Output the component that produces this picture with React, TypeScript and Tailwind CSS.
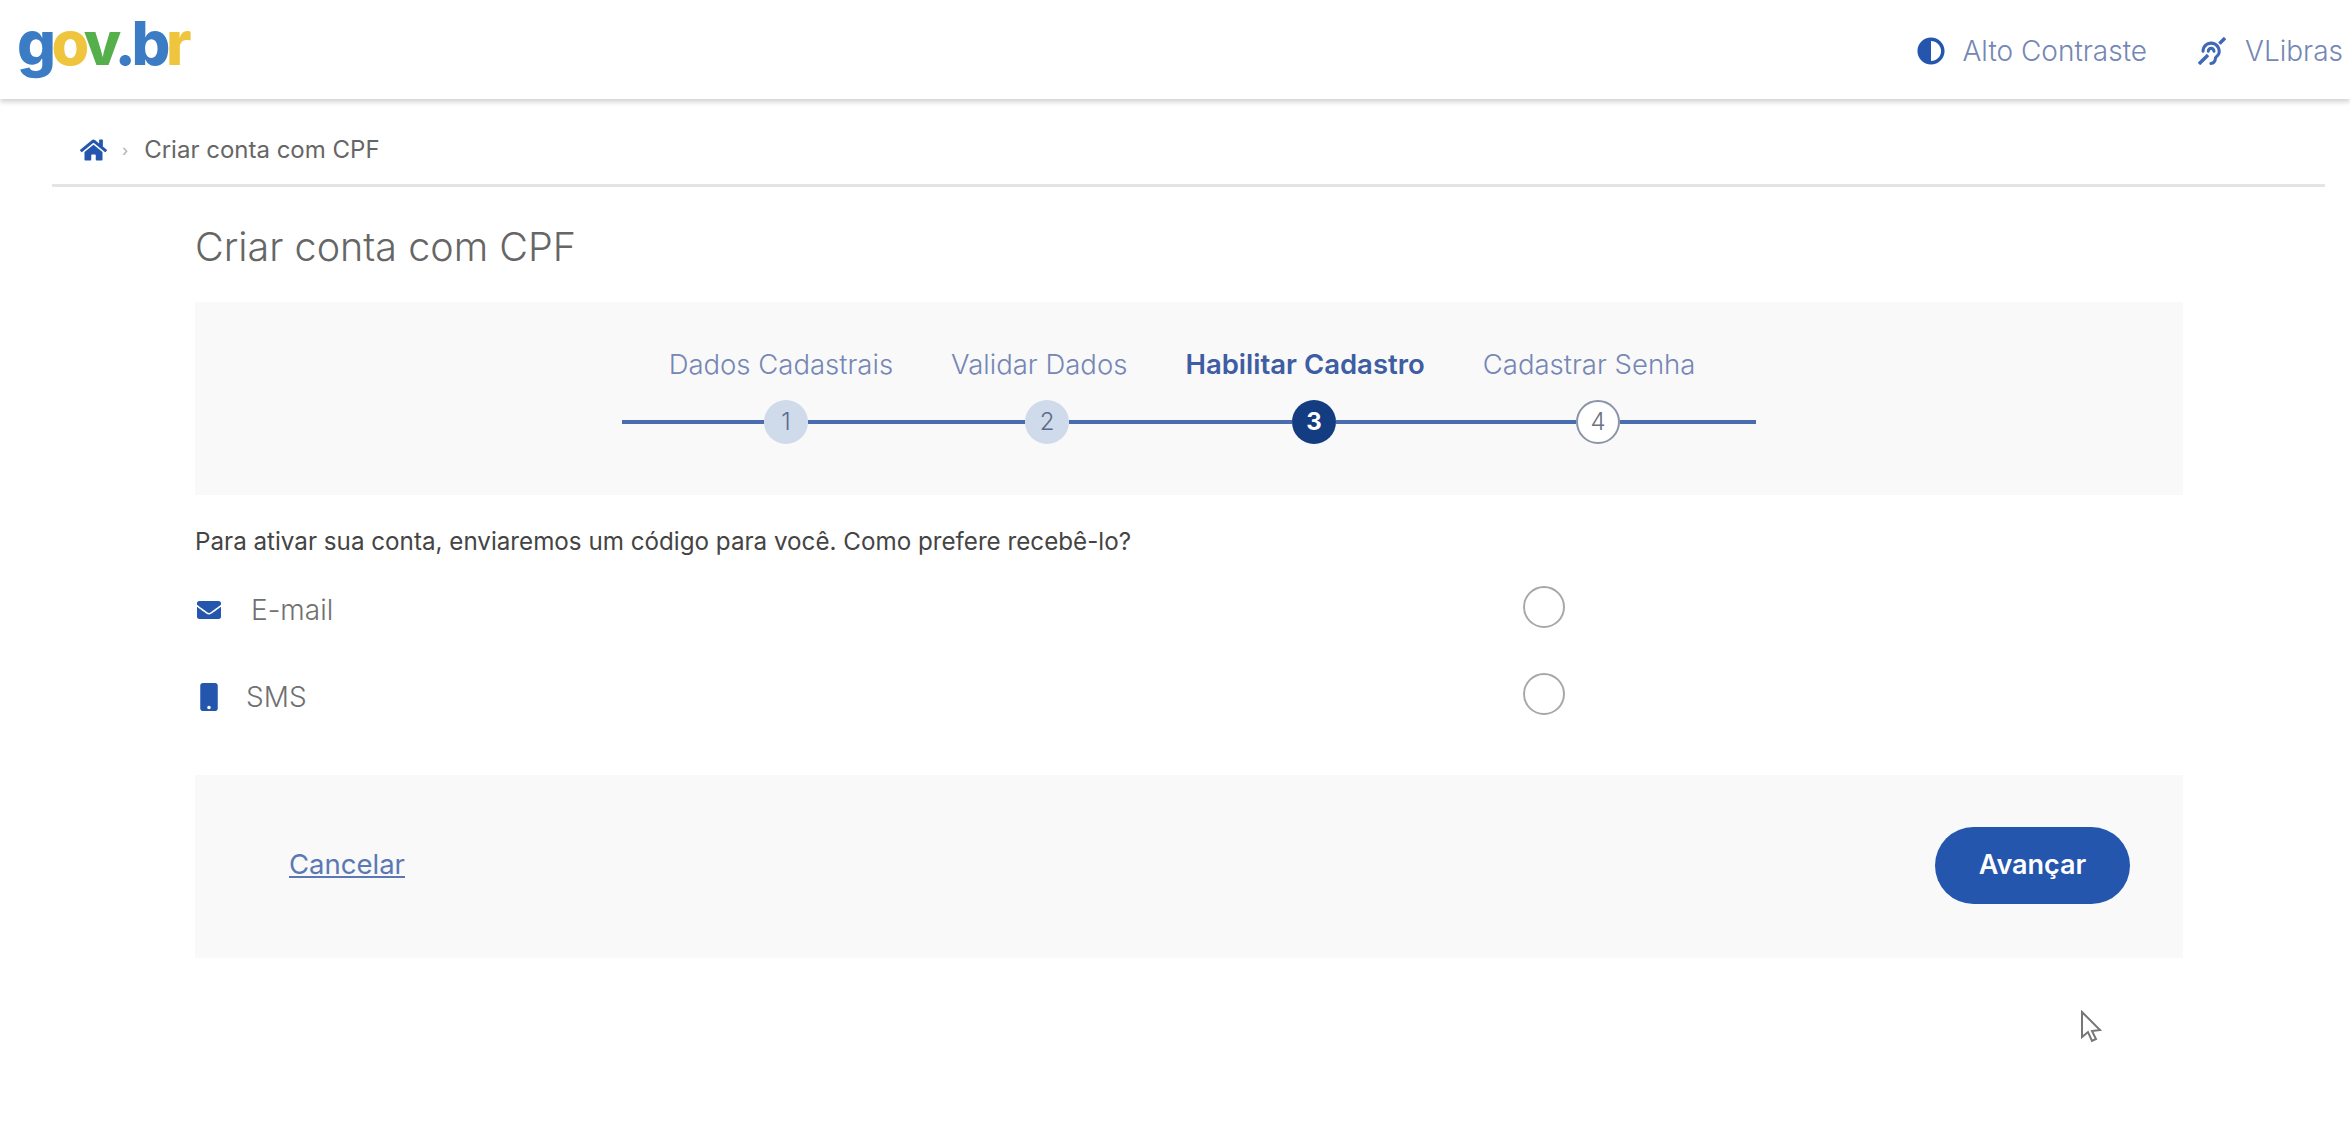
import React from 'react';
import { FaAdjust, FaDeaf, FaEnvelope, FaHome, FaMobile } from 'react-icons/fa';

const font = { fontFamily: 'Inter, "Open Sans", sans-serif' };

const steps = [
    { label: 'Dados Cadastrais', n: 1, state: 'done' },
    { label: 'Validar Dados', n: 2, state: 'done' },
    { label: 'Habilitar Cadastro', n: 3, state: 'active' },
    { label: 'Cadastrar Senha', n: 4, state: 'todo' },
];

const Logo = () => (
    <div className="text-[61px] leading-none font-extrabold tracking-[-4.5px] select-none pb-[12px]">
        <span className="text-[#3b7cc4]">g</span>
        <span className="text-[#f0c53e]">o</span>
        <span className="text-[#55b04c]">v</span>
        <span className="text-[#3b7cc4]">.b</span>
        <span className="text-[#f0c53e]">r</span>
    </div>
);

const Header = () => (
    <header className="h-[99px] flex items-center justify-between pl-[17px] pr-[7px] bg-white shadow-[0_3px_5px_rgba(0,0,0,0.18)]">
        <Logo />
        <div className="flex items-center text-[28px] font-light text-[#7587b4] pt-[2px]">
            <FaAdjust className="w-[28px] h-[28px] text-[#2456ae]" />
            <span className="ml-[18px]">Alto Contraste</span>
            <FaDeaf className="ml-[51px] w-[28px] h-[28px] text-[#3d6ab8]" />
            <span className="ml-[19px]">VLibras</span>
        </div>
    </header>
);

const Stepper = () => (
    <div className="h-[193px] bg-[#f9f9f9] flex flex-col items-center pt-[44px]">
        <div className="flex gap-[58px] pr-[14px] text-[27.5px] leading-[36px] font-light text-[#7587b4]">
            {steps.map(s => (
                <span key={s.n} className={s.state === 'active' ? 'font-semibold text-[#3e5da3]' : ''}>{s.label}</span>
            ))}
        </div>
        <div className="flex items-center mt-[18px] w-[1134px]">
            <div className="w-[142px] h-[4px] bg-[#4a6db0]" />
            <StepDot n={1} state="done" />
            <div className="w-[217px] h-[4px] bg-[#4a6db0]" />
            <StepDot n={2} state="done" />
            <div className="w-[223px] h-[4px] bg-[#4a6db0]" />
            <StepDot n={3} state="active" />
            <div className="w-[240px] h-[4px] bg-[#4a6db0]" />
            <StepDot n={4} state="todo" />
            <div className="flex-1 h-[4px] bg-[#4a6db0]" />
        </div>
    </div>
);

const StepDot: React.FC<{ n: number; state: string }> = ({ n, state }) => {
    let cls = 'bg-[#cfdaea] text-[#5b6b8c] font-light';
    if (state === 'active') cls = 'bg-[#143c80] text-white font-bold';
    if (state === 'todo') cls = 'bg-white border-2 border-[#8a93a8] text-[#6b7280] font-light';
    return (
        <div className={`w-[44px] h-[44px] shrink-0 rounded-full flex items-center justify-center text-[24px] ${cls}`}>
            {n}
        </div>
    );
};

const Option: React.FC<{ icon: React.ReactNode; label: string; className: string }> = ({ icon, label, className }) => (
    <div className={`flex items-center h-[44px] ${className}`}>
        <div className="w-[1328px] flex items-center text-[28px] font-light text-[#707070] pt-[5px]">
            {icon}
            <span>{label}</span>
        </div>
        <div className="w-[42px] h-[42px] rounded-full bg-white border-2 border-[#a8a8a8]" />
    </div>
);

export default function App() {
    return (
        <div style={font} className="relative min-h-[1144px] bg-white overflow-hidden">
            <Header />

            <div className="mx-[52px] mr-[25px] h-[88px] flex items-center pl-[28px] pt-[16px] border-b-[3px] border-[#e4e4e4]">
                <FaHome className="w-[27px] h-[24px] text-[#2456ae]" />
                <span className="ml-[15px] text-[16px] text-[#b0b0b0]">›</span>
                <span className="ml-[16px] text-[24px] text-[#666]">Criar conta com CPF</span>
            </div>

            <main className="ml-[195px] w-[1988px]">
                <h1 className="mt-[37px] h-[78px] text-[39.5px] leading-[46px] font-light text-[#666]">Criar conta com CPF</h1>

                <Stepper />

                <p className="mt-[32px] text-[24.2px] leading-[30px] text-[#444]">
                    Para ativar sua conta, enviaremos um código para você. Como prefere recebê-lo?
                </p>

                <Option
                    className="mt-[28px]"
                    icon={<FaEnvelope className="w-[28px] h-[24px] mr-[28px] text-[#2456ae]" />}
                    label="E-mail"
                />
                <Option
                    className="mt-[43px]"
                    icon={<FaMobile className="w-[28px] h-[28px] mr-[23px] text-[#2456ae]" />}
                    label="SMS"
                />

                <div className="mt-[59px] h-[183px] bg-[#f9f9f9] flex items-center justify-between pl-[94px] pr-[53px] pb-[3px]">
                    <a className="text-[27.5px] text-[#5b78b4] underline">Cancelar</a>
                    <button className="w-[195px] h-[77px] rounded-full bg-[#2456ae] text-white text-[27px] font-semibold">
                        Avançar
                    </button>
                </div>
            </main>

            {/* mouse pointer caught in the capture */}
            <svg className="absolute left-[2080px] top-[1010px]" width="24" height="36" viewBox="0 0 24 36">
                <path d="M2 2 V27 L8 22 L12 31 L16 29 L12 21 L20 20 Z" fill="#fff" stroke="#777" strokeWidth="2" />
            </svg>
        </div>
    );
}
